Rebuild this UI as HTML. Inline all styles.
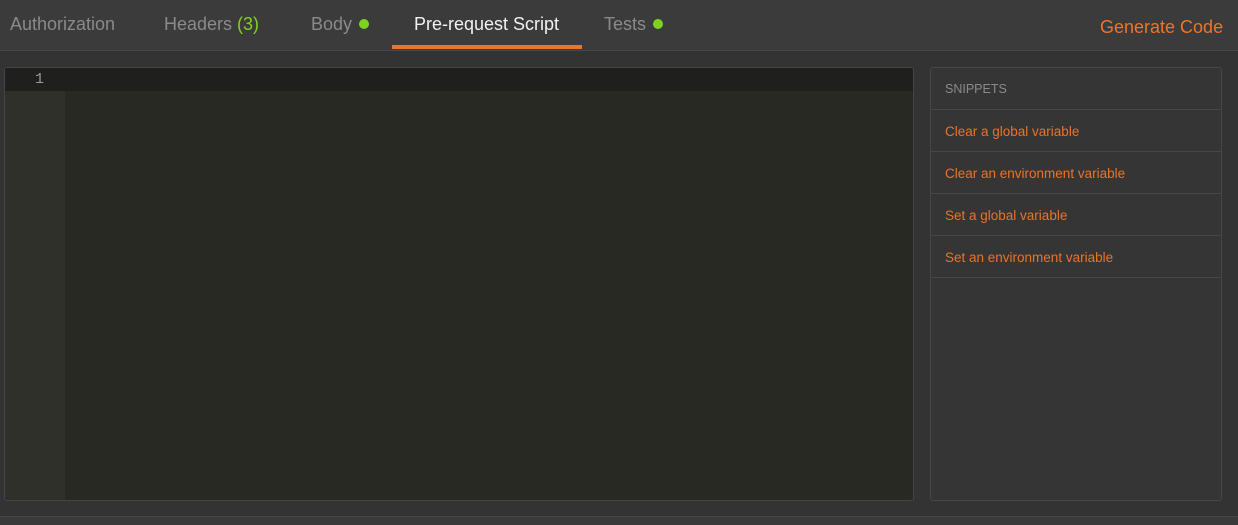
<!DOCTYPE html><html><head><style>
body{margin:0;width:1238px;height:524px;background:#333;font-family:"Liberation Sans",sans-serif;position:relative;overflow:hidden}
.hdr{position:absolute;left:0;top:0;width:1238px;height:50px;background:#3b3b3b;border-bottom:1px solid #474747}
.t{position:absolute;top:14px;font-size:18px;color:#8a8a8a}
.dot{display:inline-block;width:10px;height:10px;border-radius:50%;background:#7ed321;margin-left:7px;vertical-align:1px}
.ed{position:absolute;left:4px;top:67px;width:908px;height:432px;background:#282923;border:1px solid #454545;border-radius:3px;overflow:hidden}
.gut{position:absolute;left:0;top:0;width:60px;height:100%;background:#2f302a}
.al{position:absolute;left:0;top:0;width:100%;height:23px;background:#1f1f1d}
.sn{position:absolute;left:930px;top:67px;width:290px;height:432px;background:#353535;border:1px solid #474747;border-radius:3px}
.r{height:41px;border-bottom:1px solid #474747;font-size:13.5px;color:#e8742a;line-height:43px;padding-left:14px}
</style></head><body>
<div class="hdr">
<div class="t" style="left:10px">Authorization</div>
<div class="t" style="left:164px">Headers <span style="color:#7ed321">(3)</span></div>
<div class="t" style="left:311px">Body<span class="dot"></span></div>
<div class="t" style="left:414px;color:#f2f2f2">Pre-request Script</div>
<div style="position:absolute;left:392px;top:45px;width:190px;height:4px;background:#f07427"></div>
<div class="t" style="left:604px">Tests<span class="dot"></span></div>
<div class="t" style="left:1100px;top:17px;color:#f07427">Generate Code</div>
</div>
<div class="ed"><div class="gut"></div><div class="al"></div><div style="position:absolute;left:30px;top:3px;color:#999;font-family:'Liberation Mono',monospace;font-size:15px">1</div></div>
<div class="sn">
<div class="r" style="color:#8a8a8a;font-size:12.5px">SNIPPETS</div>
<div class="r">Clear a global variable</div>
<div class="r">Clear an environment variable</div>
<div class="r">Set a global variable</div>
<div class="r">Set an environment variable</div>
</div>
<div style="position:absolute;left:0;top:516px;width:1238px;height:8px;background:#3a3a3a;border-top:1px solid #454545"></div>
</body></html>
